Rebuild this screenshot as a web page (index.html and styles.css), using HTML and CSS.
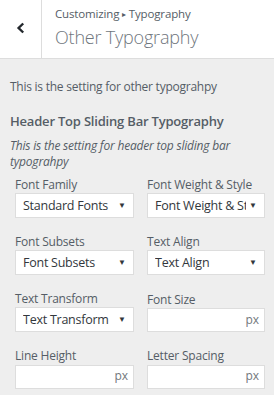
FILE: index.html
```html
<!DOCTYPE html>
<html lang="en">
<head>
  <meta charset="UTF-8">
  <meta name="viewport" content="width=device-width, initial-scale=1.0">
  <title>Other Typography</title>
  <link rel="stylesheet" href="styles.css">
</head>
<body>
  <header class="panel-header">
    <button class="back-btn" aria-label="Back">
      <svg width="10" height="12" viewBox="0 0 10 12"><path d="M7.2 1.5 L2.6 6 L7.2 10.5" fill="none" stroke="#23282d" stroke-width="2.4"/></svg>
    </button>
    <div class="panel-title">
      <span class="crumbs">Customizing <span class="sep">&#9656;</span> Typography</span>
      <h1>Other Typography</h1>
    </div>
  </header>

  <div class="panel-body">
    <p class="section-desc">This is the setting for other typograhpy</p>

    <h2 class="control-title">Header Top Sliding Bar Typography</h2>
    <p class="control-desc">This is the setting for header top sliding bar typograhpy</p>

    <div class="fields">
      <div class="field">
        <label>Font Family</label>
        <div class="select-wrap">
          <select><option>Standard Fonts</option></select>
        </div>
      </div>
      <div class="field">
        <label>Font Weight &amp; Style</label>
        <div class="select-wrap">
          <select><option>Font Weight &amp; Style</option></select>
        </div>
      </div>
      <div class="field">
        <label>Font Subsets</label>
        <div class="select-wrap">
          <select><option>Font Subsets</option></select>
        </div>
      </div>
      <div class="field">
        <label>Text Align</label>
        <div class="select-wrap">
          <select><option>Text Align</option></select>
        </div>
      </div>
      <div class="field">
        <label>Text Transform</label>
        <div class="select-wrap">
          <select><option>Text Transform</option></select>
        </div>
      </div>
      <div class="field">
        <label>Font Size</label>
        <div class="unit-input"><input type="text"><span>px</span></div>
      </div>
      <div class="field">
        <label>Line Height</label>
        <div class="unit-input"><input type="text"><span>px</span></div>
      </div>
      <div class="field">
        <label>Letter Spacing</label>
        <div class="unit-input"><input type="text"><span>px</span></div>
      </div>
    </div>
  </div>
</body>
</html>
```

FILE: styles.css
```css
body {
  margin: 0;
  background-color: #eeeeee;
  font-family: "Open Sans", "Noto Sans", sans-serif;
  color: #555d66;
}
.panel-header {
  display: flex;
  height: 58px;
  background-color: #fff;
  border-bottom: 1px solid #ddd;
}
.back-btn {
  width: 42px;
  border: none;
  border-right: 1px solid #ddd;
  background: #fff;
  padding: 0 0 2px;
  display: flex;
  align-items: center;
  justify-content: center;
}
.panel-title {
  padding: 6px 0 0 13px;
}
.crumbs {
  display: block;
  font-size: 11.5px;
  letter-spacing: -0.15px;
  line-height: 16px;
}
.crumbs .sep {
  font-size: 8px;
  vertical-align: 1px;
}
.panel-title h1 {
  margin: 3px 0 0;
  font-size: 18px;
  font-weight: 300;
  letter-spacing: -0.2px;
  line-height: 24px;
  color: #6f767d;
}
.panel-body {
  padding: 20px 9px 0 10px;
}
.section-desc {
  margin: 0;
  font-size: 12px;
  letter-spacing: -0.25px;
  line-height: 16px;
}
.control-title {
  margin: 17px 0 0;
  font-size: 13px;
  font-weight: 600;
  letter-spacing: -0.2px;
  line-height: 18px;
}
.control-desc {
  margin: 8px 0 0;
  font-size: 12px;
  font-style: italic;
  letter-spacing: -0.2px;
  line-height: 16px;
}
.fields {
  display: grid;
  grid-template-columns: 119px 118px;
  column-gap: 13px;
  row-gap: 16px;
  align-items: end;
  padding-left: 5px;
  margin-top: 7px;
}
.field label {
  display: block;
  font-size: 12px;
  letter-spacing: -0.2px;
  line-height: 15px;
  margin-bottom: 1px;
}
.select-wrap {
  position: relative;
}
.select-wrap select {
  appearance: none;
  -webkit-appearance: none;
  width: 100%;
  height: 25px;
  margin: 0;
  padding: 0 18px 0 7px;
  border: 1px solid #ddd;
  border-radius: 0;
  background: #fff;
  font-family: inherit;
  font-size: 12.5px;
  letter-spacing: -0.25px;
  color: #32373c;
}
.select-wrap::after {
  content: "\25BC";
  position: absolute;
  right: 8px;
  top: 6px;
  font-size: 8px;
  color: #32373c;
  pointer-events: none;
}
.unit-input {
  position: relative;
}
.unit-input input {
  box-sizing: border-box;
  width: 100%;
  height: 24px;
  margin: 0;
  border: 1px solid #ddd;
  background: #fff;
  padding: 0 22px 0 6px;
}
.unit-input span {
  position: absolute;
  right: 6px;
  top: 4px;
  font-size: 12px;
  line-height: 16px;
  color: #72777c;
}
```
